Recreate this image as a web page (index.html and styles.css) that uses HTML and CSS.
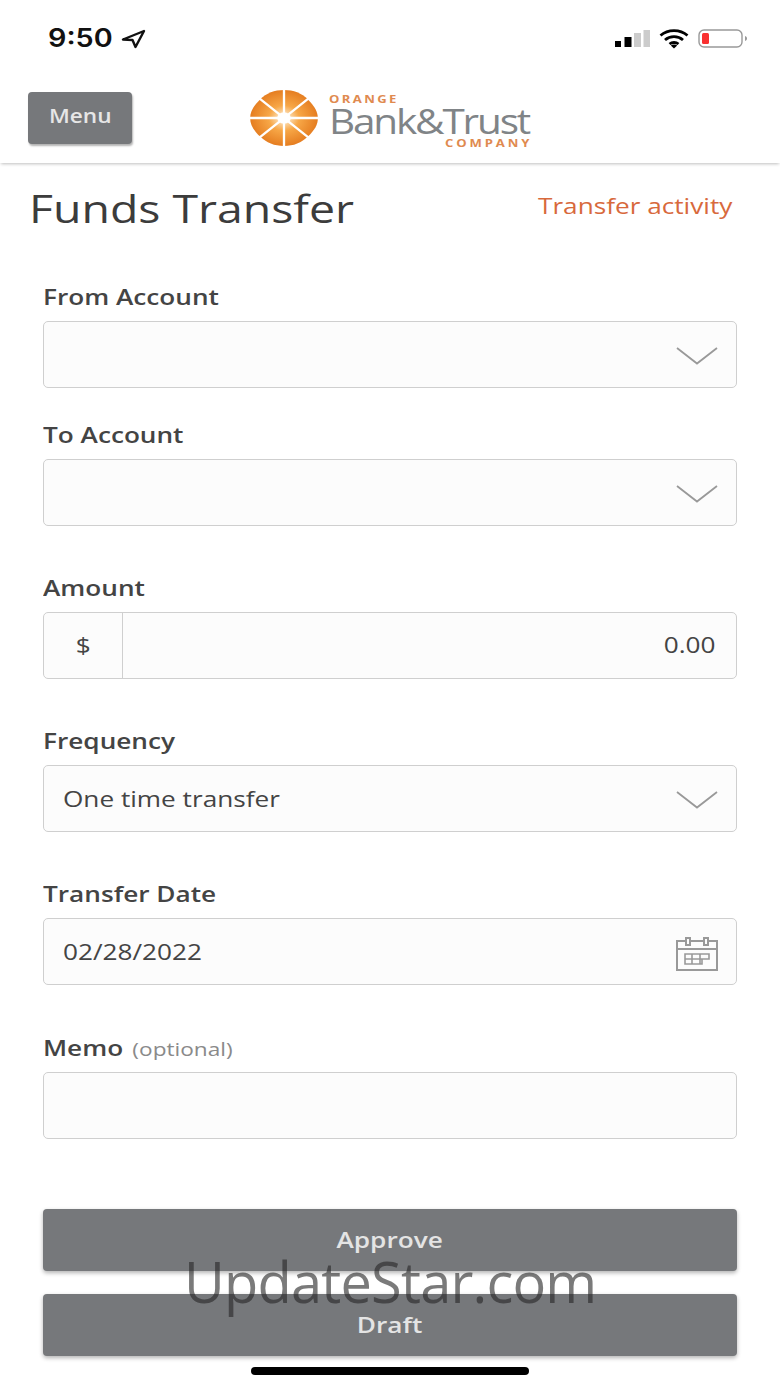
FILE: index.html
```html
<!DOCTYPE html>
<html lang="en">
<head>
<meta charset="utf-8">
<title>Funds Transfer</title>
<link rel="stylesheet" href="styles.css">
</head>
<body>
<div class="phone">
  <div class="status">
    <div class="clock"><span class="clock-time">9:50</span>
      <svg class="loc" width="25" height="20" viewBox="0 0 25 20"><path d="M23 2 2 10.500 11.500 11 14.500 18Z" fill="none" stroke="#111" stroke-width="2.400" stroke-linejoin="round"/></svg>
    </div>
    <div class="indicators">
      <svg width="35" height="18" viewBox="0 0 35 18"><rect x="0" y="11" width="6" height="6" fill="#000"/><rect x="9.500" y="7" width="7" height="10" fill="#000"/><rect x="19" y="3" width="7" height="14" fill="#ccc"/><rect x="28.500" y="0" width="6.500" height="17" fill="#ccc"/></svg>
      <svg width="30" height="20" viewBox="0 0 30 20"><path d="M1.500 6.500C9 0 21 0 28.500 6.500M6 11C11 6.500 19 6.500 24 11M10.500 15C13 13 17 13 19.500 15" fill="none" stroke="#000" stroke-width="2.800"/><path d="M15 19.500 11.800 16.500C13.500 15 16.500 15 18.200 16.500Z" fill="#000"/></svg>
      <svg width="50" height="20" viewBox="0 0 50 20"><rect x="1" y="1" width="43" height="17" rx="5" fill="none" stroke="#999" stroke-width="1.400"/><rect x="4" y="4" width="7" height="11" rx="1.500" fill="#f93131"/><path d="M47 7C48.500 7.500 49 8.500 49 9.500S48.500 11.500 47 12Z" fill="#999"/></svg>
    </div>
  </div>

  <header class="topbar">
    <button class="menu-btn"><span class="wide-c">Menu</span></button>
    <div class="logo">
      <svg class="logo-mark" width="70" height="58" viewBox="0 0 72 60">
        <defs>
          <radialGradient id="fruit" cx="50%" cy="50%" r="50%">
            <stop offset="0" stop-color="#fff"/>
            <stop offset="0.16" stop-color="#fcdcb0"/>
            <stop offset="0.45" stop-color="#f7a747"/>
            <stop offset="1" stop-color="#e57d20"/>
          </radialGradient>
        </defs>
        <path d="M36 1C46 1 54 4 61 11 68 18 71 24 71 30 71 37 68 42 61 49 54 56 46 59 36 59 26 59 18 56 11 49 4 42 1 37 1 30 1 24 4 18 11 11 18 4 26 1 36 1Z" fill="url(#fruit)"/>
        <path d="M36 0V60M0 30H72M6 6 66 54M66 6 6 54" stroke="#fff" stroke-width="2.400"/>
        <ellipse cx="36" cy="30" rx="7" ry="6" fill="#fff"/>
      </svg>
      <div class="logo-text">
        <span class="logo-small"><span class="wide">ORANGE</span></span>
        <span class="logo-name"><span class="wide">Bank&amp;Trust</span></span>
        <span class="logo-small logo-company"><span class="wide-r">COMPANY</span></span>
      </div>
    </div>
  </header>

  <main class="content">
    <div class="title-row">
      <h1><span class="wide">Funds Transfer</span></h1>
      <a class="activity" href="#"><span class="wide-r">Transfer activity</span></a>
    </div>

    <form class="form">
      <div class="field">
        <label><span class="wide">From Account</span></label>
        <div class="box">
          <svg class="chev" width="42" height="18" viewBox="0 0 42 18"><path d="M1 1 21 16.500 41 1" fill="none" stroke="#999" stroke-width="1.800"/></svg>
        </div>
      </div>
      <div class="field field-tight">
        <label><span class="wide">To Account</span></label>
        <div class="box">
          <svg class="chev" width="42" height="18" viewBox="0 0 42 18"><path d="M1 1 21 16.500 41 1" fill="none" stroke="#999" stroke-width="1.800"/></svg>
        </div>
      </div>
      <div class="field">
        <label><span class="wide">Amount</span></label>
        <div class="box box-amount">
          <span class="addon"><span class="wide-c">$</span></span>
          <span class="amount"><span class="wide-r">0.00</span></span>
        </div>
      </div>
      <div class="field">
        <label><span class="wide">Frequency</span></label>
        <div class="box">
          <span class="value"><span class="wide">One time transfer</span></span>
          <svg class="chev" width="42" height="18" viewBox="0 0 42 18"><path d="M1 1 21 16.500 41 1" fill="none" stroke="#999" stroke-width="1.800"/></svg>
        </div>
      </div>
      <div class="field">
        <label><span class="wide">Transfer Date</span></label>
        <div class="box">
          <span class="value"><span class="wide">02/28/2022</span></span>
          <svg class="cal" width="42" height="34" viewBox="0 0 42 34"><g fill="none" stroke="#999" stroke-width="2"><rect x="1" y="4" width="40" height="29"/><path d="M1 12H41"/><rect x="10" y="1" width="4" height="7" fill="#fcfcfc"/><rect x="28" y="1" width="4" height="7" fill="#fcfcfc"/><path d="M9 17H33V22H26V27H9ZM9 22H26M16 17V27M24 17V27" stroke-width="1.600"/></g></svg>
        </div>
      </div>
      <div class="field field-memo">
        <label><span class="wide">Memo <small>(optional)</small></span></label>
        <div class="box"></div>
      </div>
      <div class="actions">
        <button type="button" class="action"><span class="wide-c">Approve</span></button>
        <button type="button" class="action"><span class="wide-c">Draft</span></button>
      </div>
    </form>
  </main>

  <div class="home-bar"></div>
  <div class="watermark">UpdateStar.com</div>
</div>
</body>
</html>
```
FILE: styles.css
```css
* { box-sizing: border-box; }
html, body { margin: 0; padding: 0; background: #fff; }
body { font-family: "Open Sans", "Liberation Sans", sans-serif; color: #3a3a3a; }

/* The reference is horizontally stretched, so its text is too. */
.wide, .wide-r, .wide-c { display: inline-block; transform: scaleX(1.19); white-space: nowrap; }
.wide { transform-origin: left center; }
.wide-r { transform-origin: right center; }
.wide-c { transform-origin: center; }

.phone { position: relative; width: 780px; height: 1387px; overflow: hidden; background: #fff; }

.status { height: 75px; display: flex; justify-content: space-between; align-items: flex-start; padding: 26px 32px 0 48px; }
.clock { display: flex; align-items: center; gap: 14px; font-family: "Inter", sans-serif; font-weight: 600; font-size: 25px; line-height: 25px; color: #111; }
.clock-time { display: inline-block; transform: scaleX(1.15); transform-origin: left center; }
.loc { margin-top: 1px; margin-left: 3px; }
.indicators { display: flex; align-items: center; gap: 9px; margin-top: 3px; }

.topbar { height: 88px; display: flex; align-items: flex-start; padding: 17px 0 0 28px; box-shadow: 0 2px 3px -1px rgba(0, 0, 0, .25); position: relative; }
.menu-btn { width: 104px; height: 52px; border: 0; border-radius: 4px; background: #76787b; color: #e6e6e6; font: 600 19px "Open Sans", sans-serif; box-shadow: 1px 2px 2px rgba(0, 0, 0, .3); padding: 0 0 4px; }
.logo { display: flex; align-items: flex-start; margin-left: 117px; margin-top: -3px; gap: 10px; }
.logo-text { display: flex; flex-direction: column; width: 203px; padding-top: 3px; }
.logo-small { font-weight: 700; font-size: 11px; line-height: 13px; letter-spacing: 2px; color: #e08a4f; }
.logo-name { font-size: 34px; line-height: 32px; letter-spacing: -1.800px; color: #808487; height: 31px; }
.logo-company { text-align: right; letter-spacing: 2.400px; }

.content { padding: 0 43px; }
.title-row { height: 92px; display: flex; justify-content: space-between; margin-left: -14px; margin-right: 5px; }
h1 { margin: 0; padding-top: 18px; font-weight: 400; font-size: 39px; line-height: 53px; color: #3c3c3c; }
.activity { padding-top: 27px; font-size: 22px; line-height: 30px; color: #d8693c; text-decoration: none; }

.field { margin-top: 46px; }
.field:first-child { margin-top: 26px; }
.field-tight { margin-top: 31px; }
.field-memo { margin-top: 47px; }
label { display: block; height: 40px; font-weight: 600; font-size: 22px; line-height: 30px; color: #444; }
label small { font-weight: 400; font-size: 19px; color: #8a8a8a; margin-left: 2px; }

.box { height: 67px; border: 1.500px solid #cfcfcf; border-radius: 5px; background: #fcfcfc; display: flex; align-items: center; justify-content: space-between; padding: 0 18px 0 19px; }
.box:empty { display: block; }
.chev { margin-left: auto; margin-top: 3px; }
.cal { margin-left: auto; margin-top: 4px; }
.value { font-size: 22px; color: #444; position: relative; top: -1px; }
.box-amount { padding: 0 20px 0 0; }
.addon { width: 79px; height: 100%; display: flex; align-items: center; justify-content: center; border-right: 1.500px solid #cfcfcf; font-size: 22px; color: #444; padding-bottom: 3px; }
.amount { font-size: 22px; color: #444; position: relative; top: -2px; }

.actions { display: flex; flex-direction: column; gap: 23px; margin-top: 70px; }
.action { height: 62px; border: 0; border-radius: 4px; background: #76787b; color: #e4e4e4; font: 600 22px "Open Sans", sans-serif; box-shadow: 0 2px 4px rgba(0, 0, 0, .3); padding: 0 0 2px; }

.home-bar { position: absolute; left: 251px; top: 1367px; width: 278px; height: 8px; border-radius: 4px; background: #000; }
.watermark { position: absolute; left: 184px; top: 1243px; font-size: 56px; line-height: 76px; color: rgba(40, 40, 40, .62); letter-spacing: -.8px; white-space: nowrap; }
```
